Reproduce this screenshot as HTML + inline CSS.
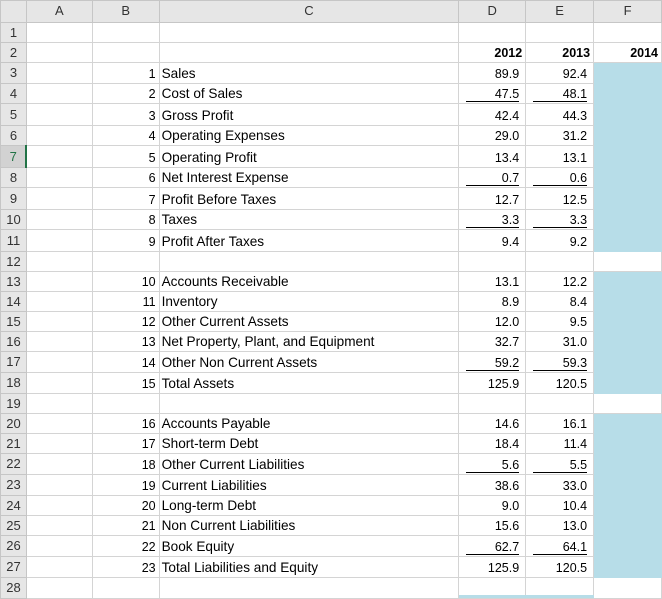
<!DOCTYPE html>
<html><head><meta charset="utf-8"><style>
body{margin:0;background:#fff;font-family:"Liberation Sans",sans-serif;font-size:12.5px;color:#000}
table{border-collapse:collapse;table-layout:fixed;position:absolute;left:0;top:0}
td{border:1px solid #d4d4d4;padding:0 3px;white-space:nowrap;overflow:hidden;vertical-align:bottom;line-height:16px;padding-bottom:1px}
tr.h td{background:#e6e6e6;color:#333;text-align:center;vertical-align:middle;border-color:#c6c6c6;font-size:13px}
td.rh{background:#e6e6e6;color:#333;text-align:center;padding:0;border-color:#c6c6c6;font-size:13px;vertical-align:middle}
td.rh.act{background:#d2d2d2;color:#217346;border-right:2px solid #217346}
td.t{font-size:13.6px;padding-left:2px}
.r{text-align:right;padding-right:6px}
td.n{padding-right:3px}
.b{font-weight:bold}
.f{background:#b7dde8;border-color:#b7dde8}
.u{position:relative}
.u:after{content:"";position:absolute;left:7px;right:6px;bottom:1px;border-bottom:1px solid #000}
</style></head><body>
<table>
<colgroup><col style="width:26px"><col style="width:66px"><col style="width:67px"><col style="width:300px"><col style="width:67px"><col style="width:68px"><col style="width:68px"></colgroup>
<tr class="h" style="height:22px"><td style="background:#e6e6e6"></td><td>A</td><td>B</td><td>C</td><td>D</td><td>E</td><td>F</td></tr>
<tr style="height:20px"><td class="rh">1</td><td></td><td></td><td></td><td></td><td></td><td></td></tr>
<tr style="height:20px"><td class="rh">2</td><td></td><td></td><td></td><td class="r b n">2012</td><td class="r b n">2013</td><td class="r b n">2014</td></tr>
<tr style="height:21px"><td class="rh">3</td><td></td><td class="r n">1</td><td class="t">Sales</td><td class="r">89.9</td><td class="r">92.4</td><td class="f"></td></tr>
<tr style="height:20px"><td class="rh">4</td><td></td><td class="r n">2</td><td class="t">Cost of Sales</td><td class="r u">47.5</td><td class="r u">48.1</td><td class="f"></td></tr>
<tr style="height:22px"><td class="rh">5</td><td></td><td class="r n">3</td><td class="t">Gross Profit</td><td class="r">42.4</td><td class="r">44.3</td><td class="f"></td></tr>
<tr style="height:20px"><td class="rh">6</td><td></td><td class="r n">4</td><td class="t">Operating Expenses</td><td class="r">29.0</td><td class="r">31.2</td><td class="f"></td></tr>
<tr style="height:22px"><td class="rh act">7</td><td></td><td class="r n">5</td><td class="t">Operating Profit</td><td class="r">13.4</td><td class="r">13.1</td><td class="f"></td></tr>
<tr style="height:20px"><td class="rh">8</td><td></td><td class="r n">6</td><td class="t">Net Interest Expense</td><td class="r u">0.7</td><td class="r u">0.6</td><td class="f"></td></tr>
<tr style="height:22px"><td class="rh">9</td><td></td><td class="r n">7</td><td class="t">Profit Before Taxes</td><td class="r">12.7</td><td class="r">12.5</td><td class="f"></td></tr>
<tr style="height:20px"><td class="rh">10</td><td></td><td class="r n">8</td><td class="t">Taxes</td><td class="r u">3.3</td><td class="r u">3.3</td><td class="f"></td></tr>
<tr style="height:22px"><td class="rh">11</td><td></td><td class="r n">9</td><td class="t">Profit After Taxes</td><td class="r">9.4</td><td class="r">9.2</td><td class="f"></td></tr>
<tr style="height:20px"><td class="rh">12</td><td></td><td></td><td></td><td></td><td></td><td></td></tr>
<tr style="height:20px"><td class="rh">13</td><td></td><td class="r n">10</td><td class="t">Accounts Receivable</td><td class="r">13.1</td><td class="r">12.2</td><td class="f"></td></tr>
<tr style="height:20px"><td class="rh">14</td><td></td><td class="r n">11</td><td class="t">Inventory</td><td class="r">8.9</td><td class="r">8.4</td><td class="f"></td></tr>
<tr style="height:20px"><td class="rh">15</td><td></td><td class="r n">12</td><td class="t">Other Current Assets</td><td class="r">12.0</td><td class="r">9.5</td><td class="f"></td></tr>
<tr style="height:20px"><td class="rh">16</td><td></td><td class="r n">13</td><td class="t">Net Property, Plant, and Equipment</td><td class="r">32.7</td><td class="r">31.0</td><td class="f"></td></tr>
<tr style="height:21px"><td class="rh">17</td><td></td><td class="r n">14</td><td class="t">Other Non Current Assets</td><td class="r u">59.2</td><td class="r u">59.3</td><td class="f"></td></tr>
<tr style="height:21px"><td class="rh">18</td><td></td><td class="r n">15</td><td class="t">Total Assets</td><td class="r">125.9</td><td class="r">120.5</td><td class="f"></td></tr>
<tr style="height:20px"><td class="rh">19</td><td></td><td></td><td></td><td></td><td></td><td></td></tr>
<tr style="height:20px"><td class="rh">20</td><td></td><td class="r n">16</td><td class="t">Accounts Payable</td><td class="r">14.6</td><td class="r">16.1</td><td class="f"></td></tr>
<tr style="height:20px"><td class="rh">21</td><td></td><td class="r n">17</td><td class="t">Short-term Debt</td><td class="r">18.4</td><td class="r">11.4</td><td class="f"></td></tr>
<tr style="height:21px"><td class="rh">22</td><td></td><td class="r n">18</td><td class="t">Other Current Liabilities</td><td class="r u">5.6</td><td class="r u">5.5</td><td class="f"></td></tr>
<tr style="height:21px"><td class="rh">23</td><td></td><td class="r n">19</td><td class="t">Current Liabilities</td><td class="r">38.6</td><td class="r">33.0</td><td class="f"></td></tr>
<tr style="height:20px"><td class="rh">24</td><td></td><td class="r n">20</td><td class="t">Long-term Debt</td><td class="r">9.0</td><td class="r">10.4</td><td class="f"></td></tr>
<tr style="height:20px"><td class="rh">25</td><td></td><td class="r n">21</td><td class="t">Non Current Liabilities</td><td class="r">15.6</td><td class="r">13.0</td><td class="f"></td></tr>
<tr style="height:21px"><td class="rh">26</td><td></td><td class="r n">22</td><td class="t">Book Equity</td><td class="r u">62.7</td><td class="r u">64.1</td><td class="f"></td></tr>
<tr style="height:21px"><td class="rh">27</td><td></td><td class="r n">23</td><td class="t">Total Liabilities and Equity</td><td class="r">125.9</td><td class="r">120.5</td><td class="f"></td></tr>
<tr style="height:21px"><td class="rh">28</td><td></td><td></td><td></td><td></td><td></td><td></td></tr>
</table>
<div style="position:absolute;left:459px;top:595px;width:135px;height:3px;background:#b7dde8"></div>
</body></html>
